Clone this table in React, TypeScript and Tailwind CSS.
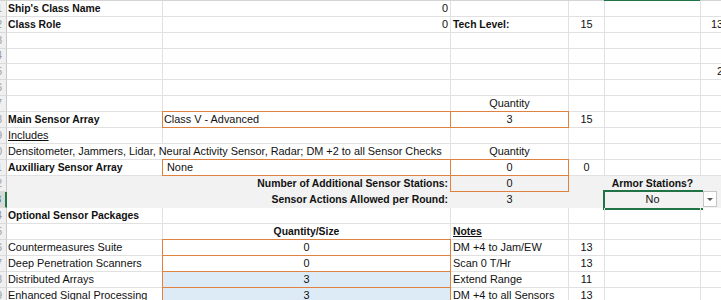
import React from 'react';

type Def = {
  t: string;
  a?: 'l' | 'c' | 'r';
  b?: boolean;
  u?: boolean;
  box?: boolean;
  blue?: boolean;
  noR?: boolean;
  sel?: boolean;
  drop?: boolean;
  pl?: string;
};

type RowDef = { n: number; h?: string; band?: boolean; cells: (Def | null)[] };

// column widths A..F (each includes its right grid line)
const COLS = ['w-[156px]', 'w-[288px]', 'w-[118px]', 'w-[36px]', 'w-[96px]', 'w-[30px]'];

const LONG = 'Densitometer, Jammers, Lidar, Neural Activity Sensor, Radar; DM +2 to all Sensor Checks';

const ROWS: RowDef[] = [
  { n: 1, cells: [{ t: "Ship's Class Name", b: true }, { t: '0', a: 'r' }, null, null, null, null] },
  {
    n: 2,
    cells: [
      { t: 'Class Role', b: true },
      { t: '0', a: 'r' },
      { t: 'Tech Level:', b: true, pl: 'pl-[2px]' },
      { t: '15', a: 'c' },
      null,
      { t: '13', a: 'r' },
    ],
  },
  { n: 3, cells: [null, null, null, null, null, null] },
  { n: 4, h: 'h-[15px]', cells: [null, null, null, null, null, null] },
  { n: 5, cells: [null, null, null, null, null, { t: '2', a: 'r' }] },
  { n: 6, cells: [null, null, null, null, null, null] },
  { n: 7, cells: [null, null, { t: 'Quantity', a: 'c' }, null, null, null] },
  {
    n: 8,
    cells: [
      { t: 'Main Sensor Array', b: true },
      { t: 'Class V - Advanced', box: true },
      { t: '3', a: 'c', box: true },
      { t: '15', a: 'c' },
      null,
      null,
    ],
  },
  { n: 9, cells: [{ t: 'Includes', u: true }, null, null, null, null, null] },
  { n: 10, cells: [{ t: LONG, noR: true }, null, { t: 'Quantity', a: 'c' }, null, null, null] },
  {
    n: 11,
    cells: [
      { t: 'Auxilliary Sensor Array', b: true },
      { t: 'None', box: true, pl: 'pl-[4px]' },
      { t: '0', a: 'c', box: true },
      { t: '0', a: 'c' },
      null,
      null,
    ],
  },
  {
    n: 12,
    band: true,
    cells: [
      null,
      { t: 'Number of Additional Sensor Stations:', a: 'r', b: true },
      { t: '0', a: 'c', box: true },
      null,
      { t: 'Armor Stations?', a: 'c', b: true },
      null,
    ],
  },
  {
    n: 13,
    band: true,
    cells: [
      null,
      { t: 'Sensor Actions Allowed per Round:', a: 'r', b: true },
      { t: '3', a: 'c' },
      null,
      { t: 'No', a: 'c', sel: true },
      { t: '', drop: true },
    ],
  },
  { n: 14, cells: [{ t: 'Optional Sensor Packages', b: true }, null, null, null, null, null] },
  {
    n: 15,
    cells: [null, { t: 'Quantity/Size', a: 'c', b: true }, { t: 'Notes', b: true, u: true, pl: 'pl-[2px]' }, null, null, null],
  },
  {
    n: 16,
    cells: [
      { t: 'Countermeasures Suite' },
      { t: '0', a: 'c', box: true },
      { t: 'DM +4 to Jam/EW', pl: 'pl-[2px]' },
      { t: '13', a: 'c' },
      null,
      null,
    ],
  },
  {
    n: 17,
    cells: [
      { t: 'Deep Penetration Scanners' },
      { t: '0', a: 'c', box: true },
      { t: 'Scan 0 T/Hr', pl: 'pl-[2px]' },
      { t: '13', a: 'c' },
      null,
      null,
    ],
  },
  {
    n: 18,
    cells: [
      { t: 'Distributed Arrays' },
      { t: '3', a: 'c', box: true, blue: true },
      { t: 'Extend Range', pl: 'pl-[2px]' },
      { t: '11', a: 'c' },
      null,
      null,
    ],
  },
  {
    n: 19,
    cells: [
      { t: 'Enhanced Signal Processing' },
      { t: '3', a: 'c', box: true, blue: true },
      { t: 'DM +4 to all Sensors', pl: 'pl-[2px]' },
      { t: '13', a: 'c' },
      null,
      null,
    ],
  },
];

function Cell({ w, c, band, isF }: { w: string; c: Def | null; band?: boolean; isF?: boolean }) {
  const align =
    c?.a === 'c'
      ? 'justify-center'
      : c?.a === 'r'
        ? isF
          ? 'justify-end pr-[7px]'
          : 'justify-end pr-[2px]'
        : `justify-start ${c?.pl ?? 'pl-px'}`;
  const bg = c?.blue ? 'bg-[#ddebf7]' : band ? 'bg-[#f2f2f2]' : '';
  const lines = band ? 'border-[#f2f2f2]' : 'border-[#e1e1e1]';
  const rightLine = c?.noR ? 'border-r-0 pr-px' : 'border-r';

  return (
    <div className={`relative shrink-0 h-full flex items-center border-b ${rightLine} ${lines} ${w} ${bg} ${align}`}>
      {c?.box && (
        <div className="absolute -left-px -top-px -right-px -bottom-px border border-[#e0823f] pointer-events-none" />
      )}
      {c?.sel && (
        <div className="absolute -left-[2px] -top-[2px] -right-[3px] -bottom-[3px] border-2 border-[#217346] pointer-events-none">
          <div className="absolute -right-[3px] -bottom-[3px] w-[4px] h-[4px] bg-[#217346] border border-white" />
        </div>
      )}
      {c?.drop && (
        <div className="absolute left-[2px] -top-px w-[14px] h-[16px] bg-white border border-[#c6c6c6] flex items-center justify-center z-10">
          <svg width="6" height="3" viewBox="0 0 6 3">
            <path d="M0 0 L6 0 L3 3 Z" fill="#555" />
          </svg>
        </div>
      )}
      {c && c.t && (
        <span
          className={`relative whitespace-nowrap leading-[15px] ${c.b ? 'font-bold text-[10.4px]' : ''} ${c.u ? 'underline underline-offset-[1px]' : ''}`}
        >
          {c.t}
        </span>
      )}
    </div>
  );
}

export default function App() {
  return (
    <div className="w-[721px] h-[300px] overflow-hidden bg-white text-[#111] text-[10.9px] font-['Liberation_Sans',Arial,sans-serif]">
      <div className="flex h-px">
        <div className="w-[604px] shrink-0 bg-[#d4d4d4]" />
        <div className="w-[96px] shrink-0 bg-[#217346]" />
        <div className="flex-1 bg-[#d4d4d4]" />
      </div>
      {ROWS.map((r) => (
        <div key={r.n} className={`flex ${r.h ?? 'h-[16px]'}`}>
          <div
            className={`w-[7px] shrink-0 h-full overflow-hidden flex items-center justify-end pr-[4px] text-[10px] border-b border-[#dadada] ${
              r.n === 13
                ? 'bg-[#d9d9d9] text-[#217346] border-r-2 border-r-[#217346]'
                : 'bg-[#f0f0f0] text-[#9a9a9a] border-r border-r-[#c8c8c8]'
            }`}
          >
            <span className="shrink-0 leading-none">{r.n + 20}</span>
          </div>
          {COLS.map((w, i) => (
            <Cell key={i} w={w} c={r.cells[i]} band={r.band} isF={i === 5} />
          ))}
        </div>
      ))}
    </div>
  );
}
